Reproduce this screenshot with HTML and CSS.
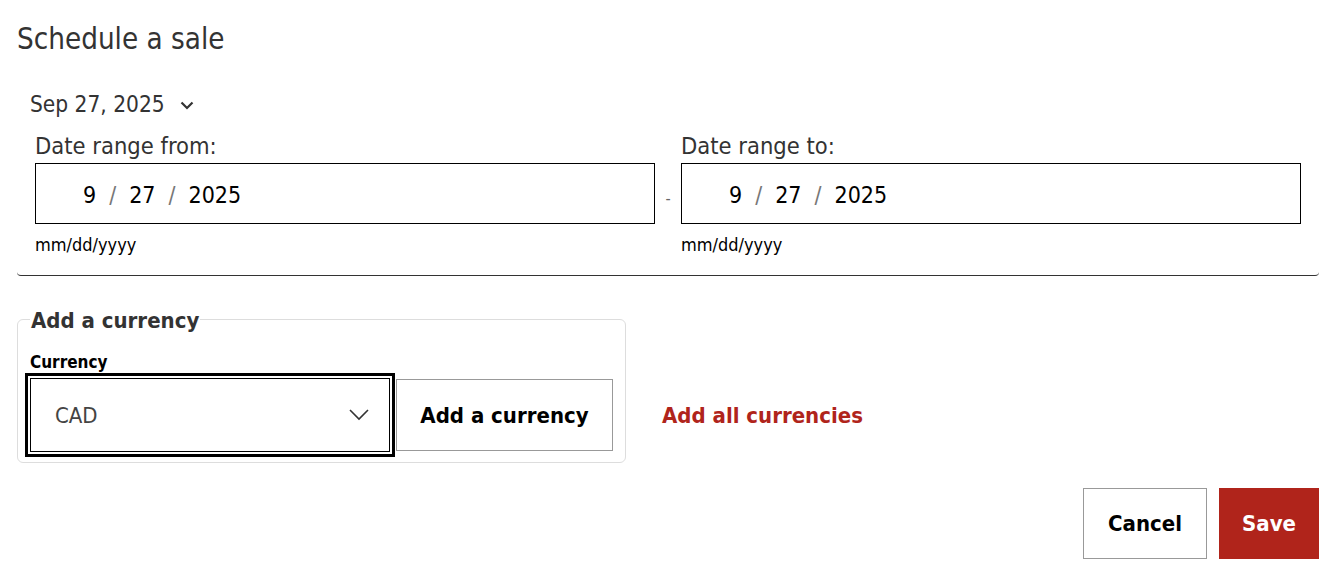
FILE: index.html
```html
<!DOCTYPE html>
<html lang="en">
<head>
<meta charset="utf-8">
<title>Schedule a sale</title>
<link rel="stylesheet" href="styles.css">
</head>
<body>
<main class="page">
  <h1 class="title">Schedule a sale</h1>

  <section class="range">
    <div class="summary">
      <span>Sep 27, 2025</span>
      <svg class="summary-chev" width="14" height="9" viewBox="0 0 14 9" aria-hidden="true"><path d="M1.5 1.5 L7 7 L12.5 1.5" fill="none" stroke="#333" stroke-width="2.2"/></svg>
    </div>
    <div class="range-row">
      <div class="field">
        <div class="field-label">Date range from:</div>
        <div class="date-box"><span>9</span><span class="sep">/</span><span>27</span><span class="sep">/</span><span>2025</span></div>
        <div class="hint">mm/dd/yyyy</div>
      </div>
      <div class="dash">-</div>
      <div class="field">
        <div class="field-label">Date range to:</div>
        <div class="date-box"><span>9</span><span class="sep">/</span><span>27</span><span class="sep">/</span><span>2025</span></div>
        <div class="hint">mm/dd/yyyy</div>
      </div>
    </div>
  </section>

  <div class="currency-row">
    <fieldset class="currency-set">
      <legend class="legend">Add a currency</legend>
      <div class="small-label">Currency</div>
      <div class="controls">
        <div class="select-wrap">
          <div class="select">
            <span>CAD</span>
            <svg class="select-chev" width="20" height="12" viewBox="0 0 20 12" aria-hidden="true"><path d="M1 1 L10 10 L19 1" fill="none" stroke="#333" stroke-width="1.6"/></svg>
          </div>
        </div>
        <button class="btn btn-add" type="button">Add a currency</button>
      </div>
    </fieldset>
    <a class="add-all" href="#">Add all currencies</a>
  </div>

  <div class="actions">
    <button class="btn btn-cancel" type="button">Cancel</button>
    <button class="btn btn-save" type="button">Save</button>
  </div>
</main>
</body>
</html>
```

FILE: styles.css
```css
* { box-sizing: border-box; }

html, body {
  margin: 0;
  padding: 0;
  background: #fff;
}

body {
  font-family: "DejaVu Sans Condensed", "DejaVu Sans", sans-serif;
  color: #333;
  width: 1332px;
  height: 570px;
  overflow: hidden;
}

.page {
  padding: 21px 13px 0 17px;
}

.title {
  margin: 0;
  font-size: 29.3px;
  font-weight: normal;
  line-height: 36px;
  color: #333;
}

.range {
  margin-top: 32px;
  border-bottom: 1px solid #333;
  border-radius: 0 0 4px 4px;
  padding: 0 18px 20px 18px;
}

.summary {
  display: flex;
  align-items: center;
  gap: 15px;
  margin-left: -5px;
  font-size: 22.5px;
  line-height: 30px;
  color: #333;
}

.summary-chev {
  margin-top: 2px;
}

.range-row {
  display: flex;
  margin-top: 15px;
}

.field {
  width: 620px;
  display: flex;
  flex-direction: column;
}

.field-label {
  font-size: 23.5px;
  line-height: 24px;
  color: #333;
}

.date-box {
  margin-top: 5px;
  height: 61px;
  border: 1px solid #000;
  display: flex;
  align-items: center;
  padding-left: 47px;
  padding-top: 2px;
  font-size: 23px;
  color: #000;
}

.date-box .sep {
  color: #777;
  margin: 0 13px;
}

.hint {
  margin-top: 11px;
  font-size: 18px;
  line-height: 20px;
  color: #000;
}

.dash {
  width: 26px;
  text-align: center;
  padding-top: 55px;
  font-size: 16px;
  color: #666;
}

.currency-row {
  display: flex;
  align-items: flex-end;
  gap: 36px;
  margin-top: 30px;
}

.currency-set {
  margin: 0;
  width: 609px;
  border: 1px solid #ddd;
  border-radius: 6px;
  padding: 0 12px 10px 12px;
}

.legend {
  padding: 0 1px;
  font-size: 22px;
  line-height: 26px;
  font-weight: bold;
  color: #333;
  position: relative;
  top: 2px;
}

.small-label {
  margin-top: 20px;
  font-size: 17px;
  line-height: 20px;
  font-weight: bold;
  color: #000;
}

.controls {
  display: flex;
  align-items: center;
  margin-top: 6px;
}

.select-wrap {
  outline: 3px solid #000;
  outline-offset: 2px;
}

.select {
  width: 360px;
  height: 74px;
  border: 1px solid #000;
  display: flex;
  align-items: center;
  justify-content: space-between;
  padding: 0 20px 0 24px;
  font-size: 22px;
  color: #444;
}

.btn {
  font-family: inherit;
  cursor: pointer;
  background: #fff;
  border: 1px solid #999;
  color: #000;
  font-weight: bold;
  padding: 0;
}

.btn-add {
  margin-left: 6px;
  width: 217px;
  height: 72px;
  font-size: 22px;
}

.add-all {
  color: #b0241b;
  font-size: 22px;
  line-height: 26px;
  font-weight: bold;
  text-decoration: none;
  margin-bottom: 34px;
}

.actions {
  display: flex;
  justify-content: flex-end;
  gap: 12px;
  margin-top: 25px;
}

.btn-cancel {
  width: 124px;
  height: 71px;
  font-size: 22px;
}

.btn-save {
  width: 100px;
  height: 71px;
  font-size: 22px;
  background: #b0241b;
  border-color: #b0241b;
  color: #fff;
}
```
